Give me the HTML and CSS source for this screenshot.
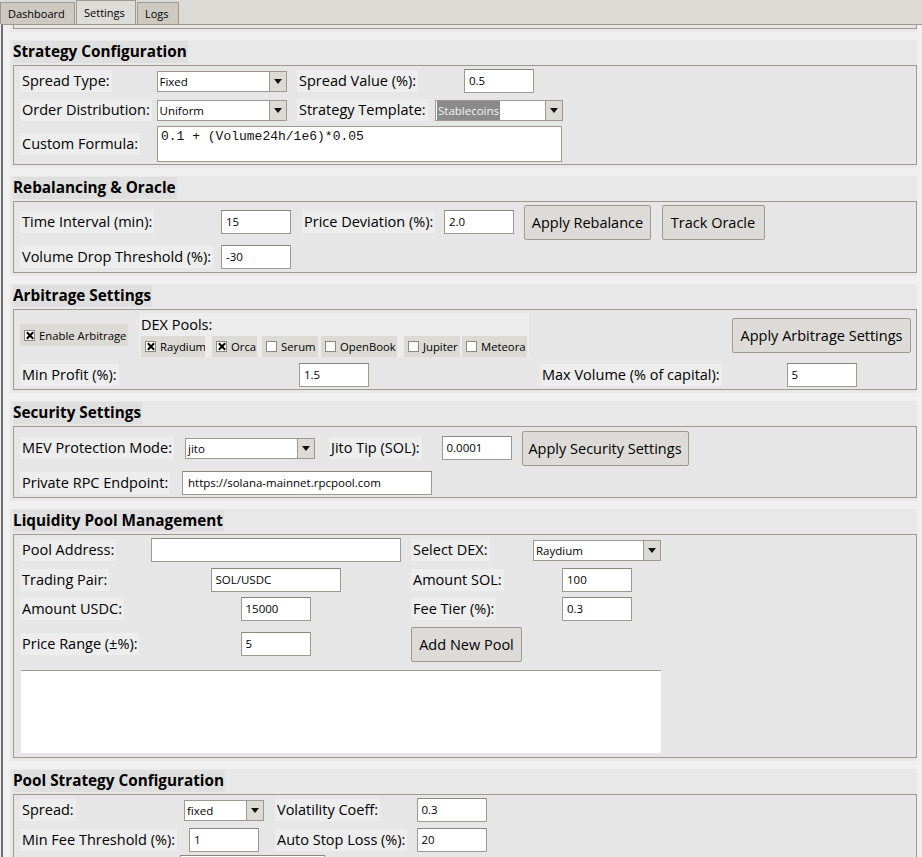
FILE: index.html
```html
<!DOCTYPE html>
<html lang="en">
<head>
<meta charset="utf-8">
<title>Settings</title>
<link rel="stylesheet" href="styles.css">
</head>
<body>
<div class="tabs">
  <div class="tab">Dashboard</div>
  <div class="tab active">Settings</div>
  <div class="tab">Logs</div>
</div>
<div class="panel">
  <div class="band prev"><div class="frame prev-frame"></div></div>

  <section class="band">
    <div class="title">Strategy Configuration</div>
    <div class="frame g-strategy">
      <span class="lbl r">Spread Type:</span>
      <div class="combo w130"><span class="val">Fixed</span><span class="arrow"></span></div>
      <span class="lbl">Spread Value (%):</span>
      <div class="entry w70">0.5</div>

      <span class="lbl r">Order Distribution:</span>
      <div class="combo w130"><span class="val">Uniform</span><span class="arrow"></span></div>
      <span class="lbl">Strategy Template:</span>
      <div class="combo w128"><span class="val sel">Stablecoins</span><span class="arrow"></span></div>

      <span class="lbl r">Custom Formula:</span>
      <div class="textbox formula">0.1 + (Volume24h/1e6)*0.05</div>
    </div>
  </section>

  <section class="band">
    <div class="title">Rebalancing &amp; Oracle</div>
    <div class="frame g-rebal">
      <span class="lbl r">Time Interval (min):</span>
      <div class="entry w70">15</div>
      <span class="lbl">Price Deviation (%):</span>
      <div class="entry w70">2.0</div>
      <div class="btn b-rebal">Apply Rebalance</div>
      <div class="btn b-oracle">Track Oracle</div>

      <span class="lbl r">Volume Drop Threshold (%):</span>
      <div class="entry w70">-30</div>
    </div>
  </section>

  <section class="band">
    <div class="title">Arbitrage Settings</div>
    <div class="frame g-arb">
      <div class="chk enable r"><span class="box on"></span><span>Enable Arbitrage</span></div>
      <div class="dex">
        <span class="dex-lbl">DEX Pools:</span>
        <div class="dex-row">
          <div class="chk c1"><span class="box on"></span><span>Raydium</span></div>
          <div class="chk c2"><span class="box on"></span><span>Orca</span></div>
          <div class="chk c3"><span class="box"></span><span>Serum</span></div>
          <div class="chk c4"><span class="box"></span><span>OpenBook</span></div>
          <div class="chk c5"><span class="box"></span><span>Jupiter</span></div>
          <div class="chk c6"><span class="box"></span><span>Meteora</span></div>
        </div>
      </div>
      <div class="btn b-arb">Apply Arbitrage Settings</div>

      <span class="lbl r">Min Profit (%):</span>
      <div class="entry w70">1.5</div>
      <span class="lbl">Max Volume (% of capital):</span>
      <div class="entry w70">5</div>
    </div>
  </section>

  <section class="band">
    <div class="title">Security Settings</div>
    <div class="frame g-sec">
      <span class="lbl r">MEV Protection Mode:</span>
      <div class="combo w130"><span class="val">jito</span><span class="arrow"></span></div>
      <span class="lbl jito">Jito Tip (SOL):</span>
      <div class="entry w70">0.0001</div>
      <div class="btn b-sec">Apply Security Settings</div>

      <span class="lbl r">Private RPC Endpoint:</span>
      <div class="entry w250 rpc">https://solana-mainnet.rpcpool.com</div>
    </div>
  </section>

  <section class="band">
    <div class="title">Liquidity Pool Management</div>
    <div class="frame g-liq">
      <span class="lbl r">Pool Address:</span>
      <div class="entry w250"></div>
      <span class="lbl">Select DEX:</span>
      <div class="combo w128"><span class="val">Raydium</span><span class="arrow"></span></div>

      <span class="lbl r">Trading Pair:</span>
      <div class="entry w130e">SOL/USDC</div>
      <span class="lbl">Amount SOL:</span>
      <div class="entry w70">100</div>

      <span class="lbl r">Amount USDC:</span>
      <div class="entry w70">15000</div>
      <span class="lbl">Fee Tier (%):</span>
      <div class="entry w70">0.3</div>

      <span class="lbl r">Price Range (±%):</span>
      <div class="entry w70">5</div>
      <div class="btn b-pool">Add New Pool</div>

      <div class="listbox"></div>
    </div>
  </section>

  <section class="band">
    <div class="title">Pool Strategy Configuration</div>
    <div class="frame g-pool">
      <span class="lbl r">Spread:</span>
      <div class="combo w80"><span class="val">fixed</span><span class="arrow"></span></div>
      <span class="lbl">Volatility Coeff:</span>
      <div class="entry w70">0.3</div>

      <span class="lbl r">Min Fee Threshold (%):</span>
      <div class="entry w70">1</div>
      <span class="lbl">Auto Stop Loss (%):</span>
      <div class="entry w70">20</div>

      <div class="entry w145 last"></div>
    </div>
  </section>
</div>
</body>
</html>
```

FILE: styles.css
```css
html, body {
  margin: 0;
  padding: 0;
  overflow: hidden;
  background: #f0f0f0;
}
body {
  width: 922px;
  height: 857px;
  font-family: "Open Sans", "Noto Sans", sans-serif;
  font-size: 14.5px;
  color: #000;
}

/* ---------- tabs ---------- */
.tabs {
  height: 24px;
  background: #dcdad5;
  display: flex;
  align-items: flex-end;
}
.tab {
  height: 22px;
  box-sizing: border-box;
  border: 1px solid #9e9a91;
  border-bottom: none;
  background: #cdc9c1;
  font-size: 11px;
  line-height: 21px;
  padding: 0 7px;
  margin-right: 1px;
  color: #000;
}
.tab:nth-child(1) { width: 75px; }
.tab:nth-child(2) { width: 60px; }
.tab:nth-child(3) { width: 42px; }
.tab.active {
  height: 24px;
  background: #dedcd7;
  line-height: 23px;
}

/* ---------- panel ---------- */
.panel {
  height: 833px;
  box-sizing: border-box;
  border-top: 1px solid #9e9a91;
  border-left: 2px solid #6f6f6f;
  margin-left: 1px;
}

.band {
  background: #e8e8e8;
  margin: 0 5px 8px 7px;
  padding: 1px 0 3px 3px;
}
.band.prev {
  padding-top: 0;
}
.prev-frame {
  display: block;
  height: 3px;
  border-top: none !important;
}

.title {
  display: inline-block;
  height: 22px;
  line-height: 21px;
  background: #dfdfdf;
  font-weight: 700;
  font-size: 15.3px;
  padding: 0 1px 0 0;
  margin-bottom: 2px;
}

.frame {
  border: 1px solid #9e9a91;
  background: #e6e6e6;
  display: grid;
  align-items: center;
  justify-items: center;
}

/* ---------- generic widgets ---------- */
.r { grid-column-start: 1; }

.lbl {
  justify-self: start;
  margin-left: 6px;
  padding: 0 2px;
  background: #ededed;
  line-height: 22px;
  white-space: nowrap;
}
.lbl.jito { margin-left: 9px; }

.entry {
  box-sizing: border-box;
  height: 24px;
  background: #fff;
  border: 1px solid #9e9a91;
  border-top-color: #8a867e;
  font-size: 11.5px;
  line-height: 22px;
  padding-left: 4px;
  white-space: nowrap;
  overflow: hidden;
}
.w70 { width: 70px; }
.w130e { width: 130px; }
.w145 { width: 145px; }
.w250 { width: 250px; }

.combo {
  box-sizing: border-box;
  height: 21px;
  background: #fff;
  border: 1px solid #9e9a91;
  display: flex;
  font-size: 11.5px;
  line-height: 19px;
}
.combo .val {
  flex: 1;
  padding-left: 2px;
  white-space: nowrap;
  overflow: hidden;
}
.combo .val.sel {
  flex: none;
  background: #8a8a8a;
  color: #f2f2f2;
  margin-right: auto;
  padding: 0 1px;
  margin-left: 1px;
}
.combo .arrow {
  width: 16px;
  background: #dcdad5;
  border-left: 1px solid #9e9a91;
  position: relative;
}
.combo .arrow::after {
  content: "";
  position: absolute;
  left: 4px;
  top: 7px;
  border-left: 4px solid transparent;
  border-right: 4px solid transparent;
  border-top: 5px solid #111;
}
.w130 { width: 130px; }
.w128 { width: 128px; }
.w80 { width: 80px; }

.btn {
  box-sizing: border-box;
  height: 35px;
  background: #dddbd7;
  border: 1px solid #9e9a91;
  border-radius: 2px;
  text-align: center;
  line-height: 33px;
  white-space: nowrap;
}
.b-rebal { width: 127px; }
.b-oracle { width: 103px; }
.b-arb { width: 179px; grid-column: 4; }
.b-sec { width: 167px; }
.b-pool { width: 111px; }

.textbox {
  box-sizing: border-box;
  background: #fff;
  border: 1px solid #9e9a91;
}
.formula {
  grid-column: 2 / 5;
  justify-self: start;
  margin-left: 5px;
  width: 405px;
  height: 36px;
  font-family: "Liberation Mono", "Courier New", monospace;
  font-size: 13px;
  line-height: 16px;
  padding: 2px 0 0 3px;
  color: #111;
}

.chk {
  box-sizing: border-box;
  height: 21px;
  background: #dcdad5;
  display: flex;
  align-items: center;
  gap: 4px;
  padding-left: 4px;
  font-size: 11.3px;
  white-space: nowrap;
  overflow: hidden;
}
.chk .box {
  width: 11px;
  height: 11px;
  box-sizing: border-box;
  background: #fff;
  border: 1px solid #8c887f;
  position: relative;
  flex: none;
}
.chk .box.on::before,
.chk .box.on::after {
  content: "";
  position: absolute;
  left: 3.5px;
  top: 0;
  width: 2px;
  height: 9px;
  background: #000;
  transform: rotate(45deg);
}
.chk .box.on::after { transform: rotate(-45deg); }

/* ---------- Strategy Configuration ---------- */
.g-strategy {
  grid-template-columns: 138px 139px 139px 138px;
  grid-template-rows: 30px 28px 40px;
}

/* ---------- Rebalancing ---------- */
.g-rebal {
  grid-template-columns: 202px 80px 143px 80px 137px 114px;
  grid-template-rows: 40px 30px;
}

/* ---------- Arbitrage ---------- */
.g-arb {
  grid-template-columns: 120px 400px 193px 189px;
  grid-template-rows: 50px 29px;
}
.chk.enable {
  justify-self: start;
  margin-left: 6px;
  width: 108px;
  height: 22px;
}
.dex {
  width: 390px;
  height: 44px;
  background: #ececec;
  box-sizing: border-box;
  padding: 1px 0 0 2px;
  display: flex;
  flex-direction: column;
}
.dex-lbl {
  height: 22px;
  line-height: 22px;
  align-self: flex-start;
}
.dex-row {
  display: grid;
  grid-template-columns: 71px 50px 59px 83px 58px 65px;
}
.c1 { width: 64px; }
.c2 { width: 45px; }
.c3 { width: 56px; }
.c4 { width: 76px; }
.c5 { width: 56px; }
.c6 { width: 65px; }

/* ---------- Security ---------- */
.g-sec {
  grid-template-columns: 166px 140px 117px 79px 178px;
  grid-template-rows: 42px 28px;
}
.rpc {
  grid-column: 2 / 4;
  justify-self: start;
  margin-left: 2px;
  padding-left: 5px;
}

/* ---------- Liquidity ---------- */
.g-liq {
  grid-template-columns: 132px 259px 123px 138px;
  grid-template-rows: 30px 29px 29px 42px 92px;
}
.listbox {
  grid-column: 1 / 5;
  justify-self: start;
  align-self: start;
  margin: 5px 0 0 7px;
  width: 640px;
  height: 82px;
  background: #fff;
  border-top: 1px solid #9e9a91;
}

/* ---------- Pool Strategy ---------- */
.g-pool {
  grid-template-columns: 165px 90px 143px 79px;
  grid-template-rows: 30px 29px 30px;
}
.entry.last {
  grid-column: 2 / 4;
  justify-self: start;
  align-self: start;
  margin: 1px 0 0 1px;
}
```
